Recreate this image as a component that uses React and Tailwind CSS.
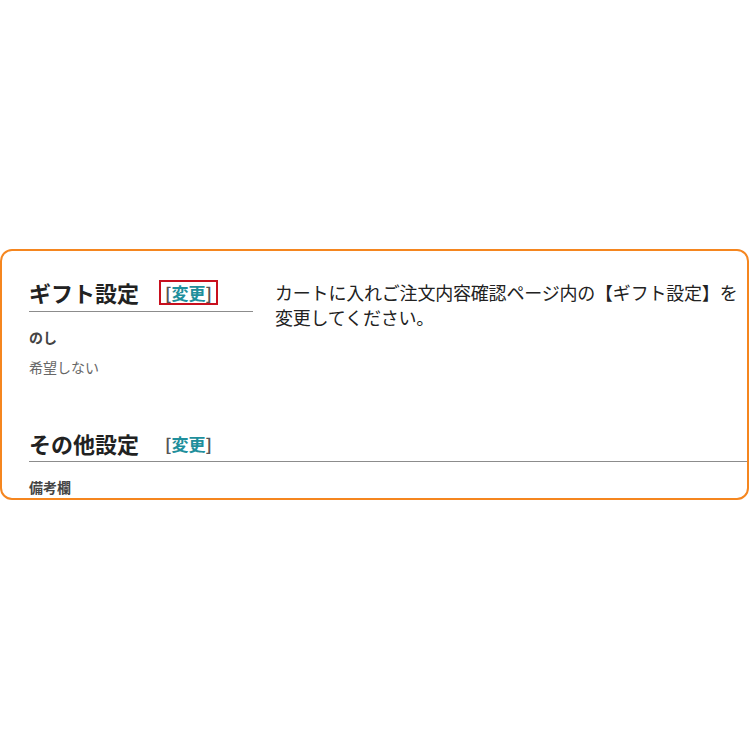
import React from 'react';

const jp = { fontFamily: '"Noto Sans CJK JP", "Noto Sans", sans-serif' };

// [変更] link next to a section heading
function ChangeLink({ boxed }) {
  return (
    <a
      href="#"
      className={
        'ml-[20px] inline-flex items-center px-[4px] h-[25px] text-[17px] font-bold leading-none ' +
        (boxed ? 'border-2 border-[#c8101e]' : 'border-2 border-transparent')
      }
    >
      <span className="text-[#555]">[</span>
      <span className="text-[#1f8f9c]">変更</span>
      <span className="text-[#555]">]</span>
    </a>
  );
}

function App() {
  return (
    <div className="w-[750px] h-[750px] bg-white pt-[249px]" style={jp}>
      <div className="w-[749px] h-[251px] border-2 border-[#f5861f] rounded-[12px] overflow-hidden pl-[27px] pt-[27px]">
        <div className="flex">
          {/* Gift settings */}
          <div className="w-[224px] shrink-0">
            <div className="flex items-center h-[28px]">
              <h2 className="text-[22px] font-bold text-[#222] leading-[28px]">ギフト設定</h2>
              <ChangeLink boxed />
            </div>
            <div className="h-px bg-[#8c8c8c] mt-[5px]" />
            <p className="mt-[15px] text-[14px] font-bold text-[#444] leading-[20px]">のし</p>
            <p className="mt-[10px] text-[14px] text-[#666] leading-[20px]">希望しない</p>
          </div>

          {/* Notice */}
          <p className="ml-[22px] flex-1 text-[18px] tracking-[-0.2px] text-[#222] leading-[25px] mt-[2px]">
            カートに入れご注文内容確認ページ内の【ギフト設定】を変更してください。
          </p>
        </div>

        {/* Other settings */}
        <div className="mt-[52px]">
          <div className="flex items-center h-[28px]">
            <h2 className="text-[22px] font-bold text-[#222] leading-[28px]">その他設定</h2>
            <ChangeLink />
          </div>
          <div className="h-px bg-[#8c8c8c] mt-[4px] w-[800px]" />
          <p className="mt-[15px] text-[14px] font-bold text-[#444] leading-[20px]">備考欄</p>
        </div>
      </div>
    </div>
  );
}

export default App;
